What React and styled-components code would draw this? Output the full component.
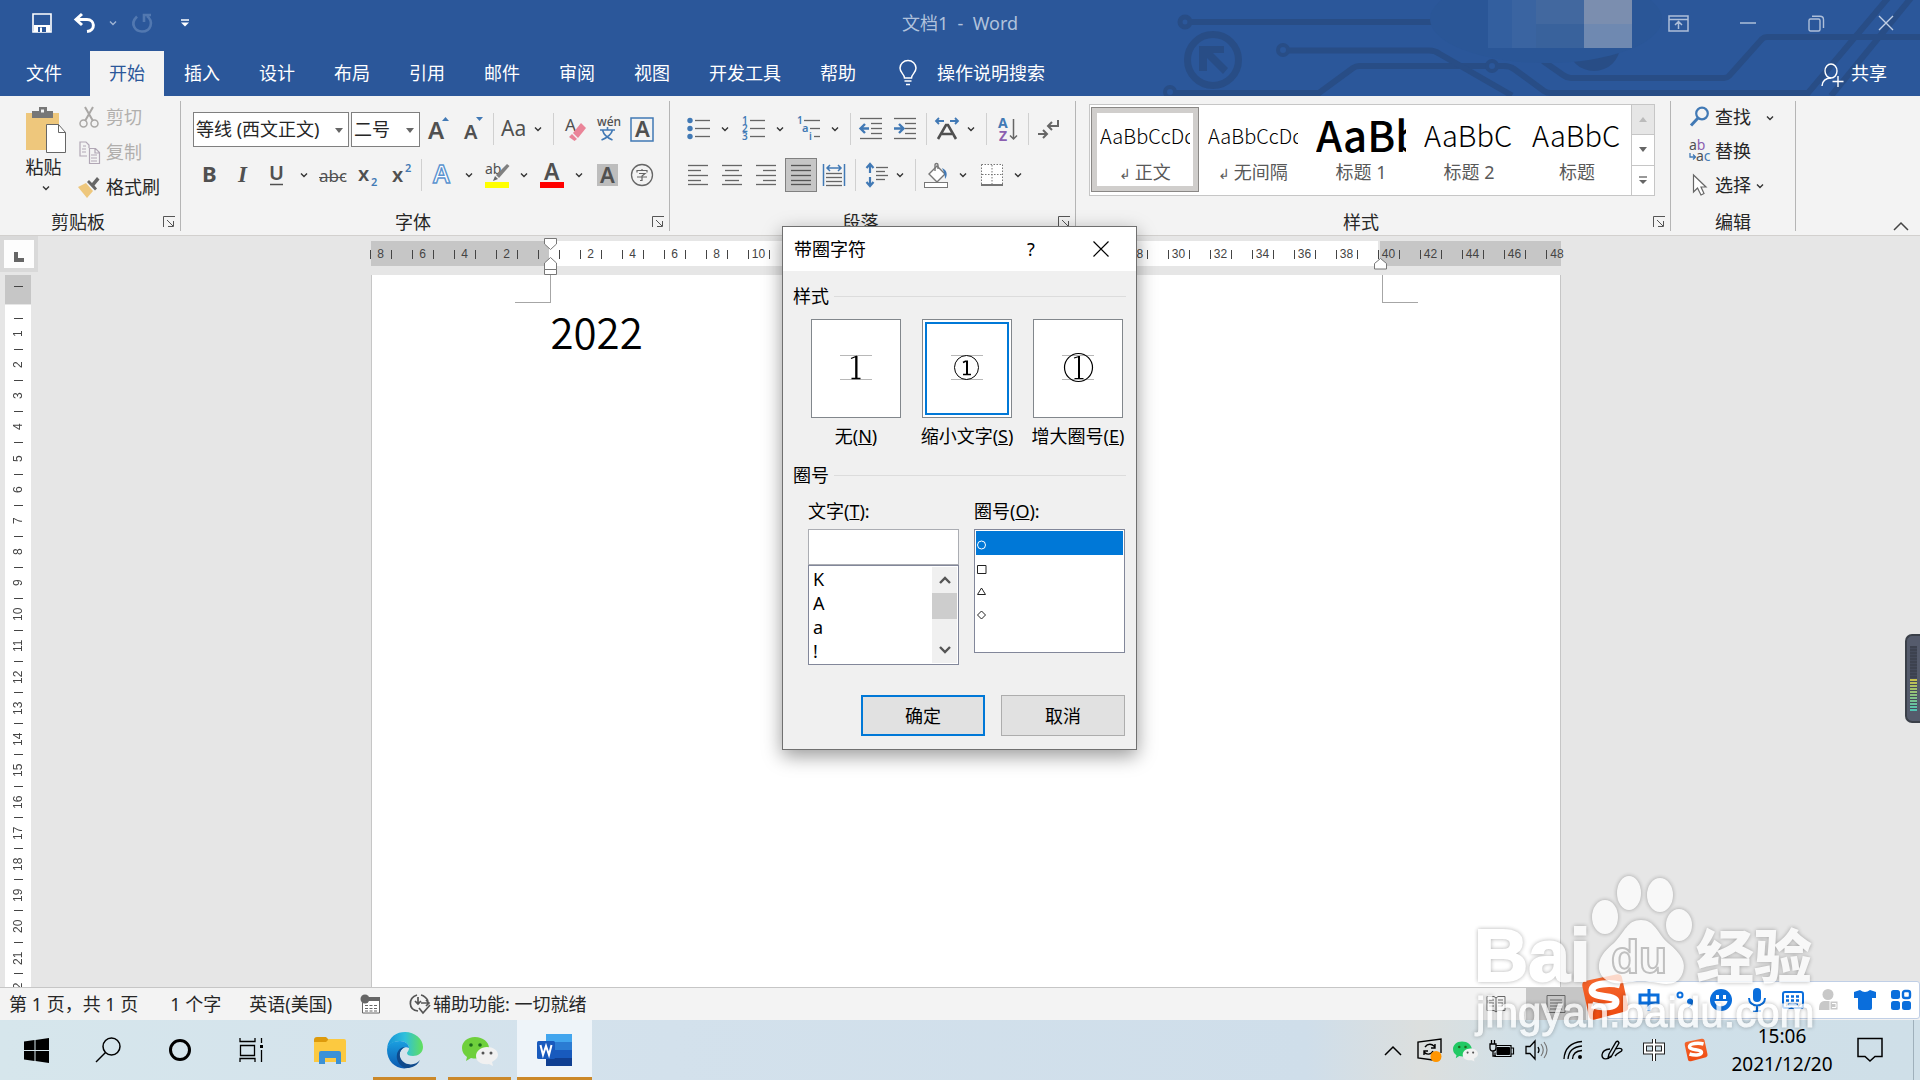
import React, { useState } from "react";
import styled, { createGlobalStyle } from "styled-components";

const GlobalStyle = createGlobalStyle`
  * {
    box-sizing: border-box;
  }

  body {
    margin: 0;
    overflow: hidden;
    background: #e6e6e6;
  }

  body, button, input, select {
    font-family: "Noto Sans", "Noto Sans CJK SC", sans-serif;
    font-size: 18px;
    line-height: 24px;
    color: #262626;
  }

  button {
    padding: 0;
    border: 0;
    background: none;
  }
`;

const StyledApp = styled.div`
  position: relative;
  display: flex;
  flex-direction: column;
  height: 100vh;
  overflow: hidden;
`;

const StyledIcon = styled.svg`
  display: block;
  flex: none;
  overflow: visible;
`;

const Icon = ({ w, h, children }) => (
  <StyledIcon width={w} height={h} viewBox={`0 0 ${w} ${h}`} fill="none" aria-hidden="true">
    {children}
  </StyledIcon>
);

/* ---------- title bar ---------- */

const Header = styled.header`
  position: relative;
  flex: none;
  background: #2b579a;
  color: #fff;
`;

const Circuit = styled.svg`
  position: absolute;
  top: 0;
  right: 0;
`;

const TitleBar = styled.div`
  position: relative;
  display: flex;
  justify-content: space-between;
  align-items: center;
  height: 51px;
  padding-bottom: 5px;
`;

const TitleSide = styled.div`
  display: flex;
  flex: 1;
  align-items: center;
  justify-content: ${props => props.$end ? "flex-end" : "flex-start"};
`;

const DocTitle = styled.div`
  color: #b1c2dc;
  white-space: pre;
`;

const QuickButton = styled.button`
  display: flex;
  align-items: center;
  justify-content: center;
  width: ${props => props.$narrow ? "14px" : "43px"};
  height: 36px;

  &:first-child {
    margin-left: 20px;
  }
`;

const WindowButton = styled.button`
  display: flex;
  align-items: center;
  justify-content: center;
  width: 69px;
  height: 46px;
`;

const TabBar = styled.nav`
  position: relative;
  display: flex;
  align-items: stretch;
  height: 45px;
`;

const Tab = styled.button`
  margin-right: 1px;
  padding: ${props => props.$file ? "0 27px 2px 26px" : "0 19px 2px"};
  background: ${props => props.$active ? "#f3f3f3" : "transparent"};
  color: ${props => props.$active ? "#2b579a" : "#fff"};
`;

const TellMe = styled.button`
  display: flex;
  align-items: center;
  gap: 20px;
  padding: 0 23px 2px;
  color: #fff;
`;

const Share = styled.button`
  display: flex;
  align-items: center;
  gap: 7px;
  margin-left: auto;
  padding: 0 33px 2px 0;
  color: #fff;
`;

/* ---------- ribbon ---------- */

const Ribbon = styled.div`
  display: flex;
  flex: none;
  height: 140px;
  padding: 5px 0 4px;
  border-bottom: 1px solid #d2d0ce;
  background: #f3f3f3;
`;

const StyledGroup = styled.section`
  display: flex;
  flex-direction: column;
  width: ${props => props.$width}px;
  border-right: 1px solid #b5b5b5;
`;

const GroupBody = styled.div`
  flex: 1;
  padding: ${props => props.$pad || "5px 0 0 12px"};
`;

const GroupFoot = styled.div`
  display: flex;
  align-items: center;
  height: 18px;
  line-height: 18px;

  span {
    flex: 1;
    text-align: center;
  }

  button {
    width: 24px;
    padding-left: 7px;
  }
`;

const Row = styled.div`
  display: flex;
  align-items: center;
  gap: ${props => props.$gap || 0}px;
  height: ${props => props.$h || 46}px;
`;

const Tool = styled.button`
  display: flex;
  align-items: center;
  justify-content: center;
  width: ${props => props.$on ? "32px" : "34px"};
  height: 34px;
  margin: ${props => props.$on ? "0 1px" : "0"};
  border: ${props => props.$on ? "1px solid #808080" : "0"};
  background: ${props => props.$on ? "#c6c6c6" : "transparent"};
`;

const DropButton = styled.button`
  display: flex;
  align-items: center;
  width: ${props => props.$tight ? "18px" : "21px"};
  height: 34px;
  padding-left: ${props => props.$tight ? "2px" : "5px"};
`;

const Sep = styled.i`
  width: 1px;
  height: 32px;
  margin: 0 4px 0 3px;
  background: #d0d0d0;
`;

const Combo = styled.label`
  position: relative;
  display: flex;
  width: ${props => props.$wide ? "156px" : "69px"};
  height: 35px;
  margin-right: 2px;
  border: 1px solid #7f7f7f;
  background: #fff;

  select {
    width: 100%;
    padding: 0 2px;
    border: 0;
    background: transparent;
    appearance: none;
  }

  svg {
    position: absolute;
    top: 15px;
    right: 5px;
  }
`;

const PasteButton = styled.button`
  display: flex;
  flex-direction: column;
  align-items: center;
  width: 63px;
  padding-top: 6px;
  gap: 3px;

  span {
    padding-right: 4px;
    line-height: 22px;
  }

  span + svg {
    margin-top: 4px;
  }
`;

const SideColumn = styled.div`
  display: flex;
  flex-direction: column;
  gap: 1px;
`;

const SideButton = styled.button`
  display: flex;
  align-items: center;
  gap: 6px;
  height: 34px;
  padding-bottom: 2px;
  color: ${props => props.disabled ? "#b1afad" : "#262626"};
`;

const Clipboard = styled.div`
  display: flex;
`;

const Gallery = styled.div`
  display: flex;
  height: 92px;
  border: 1px solid #c6c6c6;
  background: #fff;
`;

const GalleryItems = styled.div`
  display: flex;
  flex: 1;
  padding: 2px 0 3px 1px;
`;

const StyleItem = styled.button`
  display: flex;
  flex-direction: column;
  align-items: center;
  flex: 1 1 0;
  min-width: 0;
  border: 1px solid ${props => props.$active ? "#8a8886" : "transparent"};
  box-shadow: ${props => props.$active ? "inset 0 0 0 5px #d0cecc" : "none"};
  color: #595959;

  small {
    font-size: 14px;
  }
`;

const Sample = styled.span`
  display: block;
  width: 90px;
  height: 52px;
  overflow: hidden;
  font-family: "Noto Sans CJK SC", sans-serif;
  font-size: ${props => props.$size}px;
  font-weight: ${props => props.$bold ? 500 : 300};
  line-height: ${props => props.$size > 20 ? "52px" : "55px"};
  text-align: left;
  white-space: nowrap;
  color: #000;
`;

const GalleryScroll = styled.div`
  display: flex;
  flex-direction: column;
  width: 23px;
  border-left: 1px solid #c6c6c6;

  button {
    display: flex;
    flex: 1;
    align-items: center;
    justify-content: center;
  }

  button + button {
    border-top: 1px solid #c6c6c6;
  }

  button:first-child {
    background: #e6e6e6;
  }
`;

const CollapseButton = styled.button`
  align-self: flex-end;
  margin: 0 11px 0 auto;
`;

/* ---------- document ---------- */

const Workspace = styled.main`
  display: flex;
  flex: 1 1 0;
  min-height: 0;
  background: #e6e6e6;
`;

const LeftRail = styled.div`
  display: flex;
  flex-direction: column;
  width: 38px;
  min-height: 0;
`;

const TabStop = styled.button`
  flex: none;
  display: flex;
  align-items: center;
  justify-content: center;
  height: 36px;
  padding-top: 5px;
  border: 4px solid #d9d9d9;
  background: #fdfdfd;
`;

const VerticalRuler = styled.div`
  flex: 1 1 0;
  min-height: 0;
  width: 26px;
  margin: 3px 0 0 5px;
  overflow: hidden;
  background: #fff;
`;

const VerticalMargin = styled.div`
  display: flex;
  align-items: center;
  justify-content: center;
  height: 30px;
  margin-bottom: 13px;
  padding-bottom: 6px;
  border-bottom: 1px solid #e6e6e6;
  background: #c6c6c6;
`;

const Tick = styled.i`
  width: 9px;
  height: 1px;
  background: #444;
`;

const VerticalCell = styled.div`
  display: flex;
  flex-direction: column;
  align-items: center;
  height: 31px;

  &:nth-child(5n) {
    height: 32px;
  }

  span {
    flex: 1;
    writing-mode: vertical-rl;
    transform: rotate(180deg);
    font-family: "Liberation Sans", sans-serif;
    font-size: 12px;
    line-height: 12px;
    text-align: center;
    color: #444;
  }
`;

const Canvas = styled.div`
  display: flex;
  flex: 1;
  flex-direction: column;
  align-items: center;
  min-height: 0;
  padding: 5px 27px 0 0;
`;

const HorizontalRuler = styled.div`
  position: relative;
  flex: none;
  width: 1190px;
  height: 25px;
  margin-bottom: 9px;
  background: linear-gradient(90deg, #c6c6c6 178px, #fff 178px, #fff 1007px, #e6e6e6 1007px, #e6e6e6 1009px, #c6c6c6 1009px);
`;

const RulerTrack = styled.div`
  display: flex;
  height: 25px;
  padding-top: 2px;
  clip-path: inset(0 -8px 0 -1px);
`;

const RulerCell = styled.div`
  display: flex;
  flex: none;
  justify-content: center;
  align-items: center;
  width: 42px;

  &:first-child {
    margin-left: -11px;
  }

  &:last-child span {
    border-right: 0;
  }

  span {
    width: 22px;
    height: 9px;
    border: solid #444;
    border-width: 0 1px;
    font-family: "Liberation Sans", sans-serif;
    font-size: 12px;
    line-height: 9px;
    text-align: center;
    color: #444;
  }
`;

const IndentMarker = styled.svg`
  position: absolute;
  top: ${props => props.$right ? "17px" : "-3px"};
  left: ${props => props.$right ? "1003px" : "173px"};
`;

const Page = styled.article`
  flex: 1;
  width: 1190px;
  border: solid #c6c6c6;
  border-width: 0 1px;
  background: #fff;
`;

const PageCorners = styled.div`
  display: flex;
  justify-content: space-between;
  padding: 0 142px 0 143px;

  i {
    width: 36px;
    height: 28px;
    border: solid #a6a6a6;
    border-width: 0 1px 1px 0;
  }

  i + i {
    border-width: 0 0 1px 1px;
  }
`;

const PageText = styled.p`
  margin: 0;
  padding-left: 179px;
  font-family: "Noto Sans CJK SC", sans-serif;
  font-size: 42px;
  font-weight: 350;
  line-height: 56px;
  color: #000;
`;

const LevelMeter = styled.div`
  position: absolute;
  top: 634px;
  right: 0;
  display: flex;
  justify-content: center;
  width: 15px;
  height: 89px;
  padding: 10px 0;
  border: 2px solid #3b4049;
  border-right: 0;
  border-radius: 7px 0 0 7px;
  background: #555b6c;

  i {
    width: 7px;
    background:
      repeating-linear-gradient(transparent 0, transparent 2px, #444a5a 2px, #444a5a 3px),
      linear-gradient(#3d424f 33px, #c9c04a 33px, #4fc3b5);
  }
`;

/* ---------- dialog ---------- */

const StyledDialog = styled.div`
  position: absolute;
  top: 226px;
  left: calc(50% - 178px);
  width: 355px;
  border: 1px solid #707070;
  background: #f0f0f0;
  box-shadow: 0 6px 18px rgba(0, 0, 0, 0.4);
  color: #000;

  button {
    color: #000;
  }
`;

const DialogTitle = styled.div`
  display: flex;
  align-items: center;
  height: 44px;
  padding: 0 0 1px 11px;
  background: #fff;

  span {
    flex: 1;
  }

  button {
    display: flex;
    align-items: center;
    justify-content: center;
    width: 70px;
    height: 42px;
  }
`;

const DialogBody = styled.div`
  padding: 13px 10px;
`;

const Legend = styled.div`
  display: flex;
  align-items: center;
  gap: 5px;
  line-height: 24px;

  &::after {
    content: "";
    flex: 1;
    height: 1px;
    background: #dcdcdc;
  }
`;

const Choices = styled.div`
  display: flex;
  gap: 17px;
  padding: 11px 0 15px 16px;
`;

const Choice = styled.label`
  display: flex;
  flex-direction: column;
  align-items: center;
  width: 94px;
  gap: 6px;
  white-space: nowrap;

  input {
    position: absolute;
    opacity: 0;
  }

  div {
    display: flex;
    align-items: center;
    justify-content: center;
    width: 90px;
    height: 99px;
    padding-bottom: 3px;
    border: 1px solid #82878c;
    background: #fff;
    outline: ${props => props.$on ? "2px solid #0078d7" : "0"};
    outline-offset: -5px;
  }
`;

const Lists = styled.div`
  display: flex;
  gap: 15px;
  padding: 12px 0 30px 15px;
`;

const ListColumn = styled.div`
  display: flex;
  flex-direction: column;
  width: 151px;

  label {
    margin-bottom: 6px;
  }

  input {
    width: 100%;
    height: 36px;
    border: 1px solid #abadb3;
    background: #fff;
  }
`;

const ListBox = styled.div`
  display: flex;
  height: ${props => props.$tall ? "124px" : "100px"};
  padding: 1px;
  border: 1px solid #82879a;
  background: #fff;
`;

const Options = styled.ul`
  flex: 1;
  margin: 0;
  padding: 0;
  list-style: none;
`;

const Option = styled.li`
  height: 24px;
  padding-left: 3px;
  line-height: 24px;
  color: #000;
`;

const RingOption = styled.li`
  display: flex;
  align-items: center;
  height: ${props => props.$on ? "24px" : "23px"};
  padding-top: 4px;
  background: ${props => props.$on ? "#0078d7" : "transparent"};
`;

const ScrollColumn = styled.div`
  display: flex;
  flex-direction: column;
  width: 25px;
  background: #f0f0f0;

  button {
    display: flex;
    align-items: center;
    justify-content: center;
    height: 26px;
  }

  i {
    height: 26px;
    margin-bottom: auto;
    background: #cdcdcd;
  }
`;

const Actions = styled.div`
  display: flex;
  justify-content: flex-end;
  gap: 16px;
  padding-right: 1px;
`;

const ActionButton = styled.button`
  && {
    width: 124px;
    height: 41px;
    border: ${props => props.$primary ? "2px solid #0078d7" : "1px solid #adadad"};
    background: #e1e1e1;
  }
`;

/* ---------- status bar and taskbar ---------- */

const StatusBar = styled.footer`
  display: flex;
  flex: none;
  align-items: center;
  height: 33px;
  padding-left: 9px;
  border-top: 1px solid #c6c6c6;
  background: #f3f3f3;
`;

const StatusItem = styled.button`
  display: flex;
  align-items: center;
  gap: 2px;
  margin-right: 28px;
  white-space: nowrap;

  &:first-child {
    margin-right: 32px;
  }
`;

const ViewButtons = styled.div`
  display: flex;
  align-self: stretch;
  margin: 0 334px 0 auto;

  button {
    display: flex;
    align-items: center;
    justify-content: center;
    width: 60px;
  }

  button + button {
    background: #c6c6c6;
  }
`;

const ImeBar = styled.div`
  position: absolute;
  right: 0;
  bottom: 61px;
  display: flex;
  align-items: center;
  height: 38px;
  padding-left: 24px;
  border: 1px solid #c0cfe6;
  border-radius: 3px;
  background: #fff;

  button {
    display: flex;
    align-items: center;
    justify-content: center;
    width: 36px;
    height: 36px;
  }
`;

const ImeLogo = styled.div`
  position: absolute;
  right: 291px;
  bottom: 59px;
`;

const Taskbar = styled.div`
  display: flex;
  flex: none;
  height: 60px;
  background: linear-gradient(90deg, #d6e6ec, #d3e1ec 35%, #cfdeea 68%, #dcdfde 74%, #cfe0e9 80%, #cfdfe8);
`;

const SystemButtons = styled.div`
  display: flex;
  margin-right: 4px;
`;

const TaskButton = styled.button`
  display: flex;
  align-items: center;
  justify-content: center;
  width: ${props => props.$app ? "75px" : "72px"};
  padding-top: 3px;
  border: solid transparent;
  border-width: 0 0 3px;
  border-image: ${props => props.$running ? "linear-gradient(90deg, transparent 7px, #cb8829 7px, #cb8829 68px, transparent 68px) 1" : "none"};

  ${props => props.$active ? `
    background: #eef4f9;
    border-color: #cb8829;
  ` : null}
`;

const Tray = styled.div`
  display: flex;
  align-items: center;
  margin-left: auto;
  padding-right: 6px;
`;

const TrayButton = styled.button`
  display: flex;
  align-items: center;
  justify-content: center;
  width: ${props => props.$wide ? "42px" : "36px"};
  height: 60px;
`;

const Clock = styled.button`
  width: 132px;
  padding-right: 2px;
  font-size: 19px;
  line-height: 28px;
  color: #000;

  span {
    display: block;
  }
`;

const DesktopEdge = styled.i`
  width: 1px;
  height: 60px;
  margin-left: 22px;
  background: #9fb0bb;
`;

const Watermark = styled.svg`
  position: absolute;
  right: 90px;
  bottom: 30px;
  pointer-events: none;
  opacity: 0.75;
  filter: drop-shadow(0 0 2px rgba(0, 0, 0, 0.4));
`;

/* ---------- small drawings ---------- */

const Chevron = ({ color = "#333" }) => (
  <Icon w={8} h={6}><path d="M1 1.500l3 3 3-3" stroke={color} strokeWidth="1.400" /></Icon>
);

const Drop = ({ tight }) => (
  <DropButton $tight={tight} aria-label="更多"><Chevron /></DropButton>
);

const Caret = ({ up, color = "#666" }) => (
  <Icon w={8} h={5}><path d={up ? "M0 5h8L4 0z" : "M0 0h8L4 5z"} fill={color} /></Icon>
);

const glyph = { fontFamily: "Noto Sans, sans-serif", fill: "#505050" };

const lines = (rows, color = "#666") => rows.map(([x, y, w], i) => (
  <path key={i} d={`M${x} ${y + 0.5}h${w}`} stroke={color} strokeWidth="1.300" />
));

const icons = {
  grow: <Icon w={22} h={26}><text x="0" y="23" fontSize="24" fontWeight="600" style={glyph}>A</text><path d="M14 5l3.500-4L21 5z" fill="#4179b5" /></Icon>,
  shrink: <Icon w={22} h={26}><text x="2" y="23" fontSize="20" fontWeight="600" style={glyph}>A</text><path d="M14 1h7l-3.500 4z" fill="#4179b5" /></Icon>,
  caseAa: <Icon w={28} h={24}><text x="0" y="19" fontSize="21" style={glyph}>Aa</text></Icon>,
  clear: (
    <Icon w={22} h={26}>
      <text x="1" y="15" fontSize="17" style={glyph}>A</text>
      <path d="M9 17L17 7l5 5-8 10z" fill="#ea8498" /><path d="M5 21l3-3 5 5-2.500 2z" fill="#ea8498" />
    </Icon>
  ),
  pinyin: (
    <Icon w={24} h={28}>
      <text x="0" y="11" fontSize="12" fontWeight="500" style={glyph}>wén</text>
      <path d="M3 15h15M10.500 12v3M5.500 15c1 4 5 8 10 10M15.500 15c-1 4-6 8-11 10" stroke="#4179b5" strokeWidth="1.600" />
    </Icon>
  ),
  boxA: <Icon w={24} h={25}><rect x="0" y="1" width="22" height="23" stroke="#4179b5" strokeWidth="1.500" /><text x="4" y="20" fontSize="22" fontWeight="600" style={glyph}>A</text></Icon>,
  bold: <Icon w={16} h={22}><text x="0" y="18" fontSize="22" fontWeight="700" style={glyph}>B</text></Icon>,
  italic: <Icon w={16} h={22}><text x="2" y="18" fontSize="23" fontStyle="italic" fontWeight="700" style={{ ...glyph, fontFamily: "Liberation Serif, serif" }}>I</text></Icon>,
  underline: <Icon w={18} h={24}><text x="0" y="17" fontSize="20" fontWeight="600" style={glyph}>U</text><path d="M1 21.500h13" stroke="#505050" strokeWidth="1.500" /></Icon>,
  strike: <Icon w={28} h={22}><text x="0" y="18" fontSize="17" style={glyph}>abc</text><path d="M0 13.500h26" stroke="#505050" /></Icon>,
  sub: <Icon w={22} h={24}><text x="2" y="18" fontSize="20" fontWeight="600" style={glyph}>x</text><text x="15" y="23" fontSize="11" fontWeight="600" style={{ ...glyph, fill: "#4179b5" }}>2</text></Icon>,
  sup: <Icon w={22} h={24}><text x="2" y="19" fontSize="20" fontWeight="600" style={glyph}>x</text><text x="15" y="9" fontSize="11" fontWeight="600" style={{ ...glyph, fill: "#4179b5" }}>2</text></Icon>,
  effects: <Icon w={22} h={24}><text x="1" y="20" fontSize="25" fontWeight="600" style={{ ...glyph, fill: "#fff", stroke: "#5b93cf", strokeWidth: 1.4 }}>A</text></Icon>,
  highlight: (
    <Icon w={26} h={28}>
      <text x="0" y="13" fontSize="14" style={glyph}>ab</text>
      <path d="M22 3l2.500 2L14 17l-3-3z" fill="#808080" /><path d="M10 15l3 3-5 2z" fill="#666" />
      <path d="M0 21h24v6H0z" fill="#ff0" />
    </Icon>
  ),
  color: <Icon w={26} h={28}><text x="4" y="19" fontSize="23" fontWeight="600" style={glyph}>A</text><path d="M0 21h24v6H0z" fill="#f00" /></Icon>,
  shade: <Icon w={22} h={22}><path d="M0 0h21v22H0z" fill="#bdbdbd" /><text x="3" y="19" fontSize="22" fontWeight="600" style={glyph}>A</text></Icon>,
  enclose: <Icon w={24} h={24}><circle cx="12" cy="12" r="10.500" stroke="#666" strokeWidth="1.300" /><path d="M7 9.500V7.500h10v2M12 6v1.500M9 10.500h6l-3 2.500v4.500h-2M7 14h10" stroke="#666" strokeWidth="1.200" /></Icon>,
  bullets: <Icon w={24} h={24}>{[3, 11, 19].map(y => <circle key={y} cx="3" cy={y + 0.5} r="2.700" fill="#4179b5" />)}{lines([[8, 3, 15], [8, 11, 15], [8, 19, 15]])}</Icon>,
  numbers: <Icon w={24} h={26}>{["1", "2", "3"].map((n, i) => <text key={n} x="0" y={8 + i * 8} fontSize="10" fontWeight="600" style={{ ...glyph, fill: "#4179b5" }}>{n}</text>)}{lines([[8, 4, 15], [8, 12, 15], [8, 20, 15]])}</Icon>,
  multi: (
    <Icon w={24} h={26}>
      <text x="0" y="8" fontSize="10" fontWeight="600" style={{ ...glyph, fill: "#4179b5" }}>1</text>
      <text x="5" y="16" fontSize="11" fontWeight="600" style={{ ...glyph, fill: "#4179b5" }}>a</text>
      <text x="12" y="24" fontSize="10" fontWeight="600" style={{ ...glyph, fill: "#4179b5" }}>i</text>
      {lines([[7, 4, 16], [13, 12, 10], [17, 20, 6]])}
    </Icon>
  ),
  outdent: <Icon w={24} h={24}>{lines([[0, 1, 22], [11, 6, 11], [11, 11, 11], [11, 16, 11], [0, 21, 22]])}<path d="M9 11.500H1M5 7L.5 11.500 5 16" stroke="#4179b5" strokeWidth="2.400" /></Icon>,
  indent: <Icon w={24} h={24}>{lines([[0, 1, 22], [11, 6, 11], [11, 11, 11], [11, 16, 11], [0, 21, 22]])}<path d="M0 11.500h9M5 7l4.500 4.500L5 16" stroke="#4179b5" strokeWidth="2.400" /></Icon>,
  asian: <Icon w={26} h={24}><path d="M9 4H1m3-3L1 4l3 3M15 4h8m-3-3l3 3-3 3" stroke="#4179b5" strokeWidth="1.800" /><path d="M3 22L11 8h2l8 14M7 17h10" stroke="#505050" strokeWidth="2.600" /></Icon>,
  sort: (
    <Icon w={22} h={26}>
      <text x="1" y="12" fontSize="14" fontWeight="700" style={{ ...glyph, fill: "#4179b5" }}>A</text>
      <text x="2" y="25" fontSize="14" fontWeight="700" style={{ ...glyph, fill: "#8b5fb0" }}>Z</text>
      <path d="M16.500 3v20M13 19.500l3.500 3.500 3.500-3.500" stroke="#666" strokeWidth="1.500" />
    </Icon>
  ),
  marks: <Icon w={24} h={24}><path d="M20 3v6H10m4-4l-4 4 4 4M0 17h9m-4-4l4 4-4 4" stroke="#666" strokeWidth="2" /></Icon>,
  left: <Icon w={22} h={24}>{lines([[0, 2, 20], [0, 7, 13], [0, 12, 20], [0, 17, 13], [0, 21, 20]])}</Icon>,
  center: <Icon w={22} h={24}>{lines([[0, 2, 20], [3, 7, 14], [0, 12, 20], [3, 17, 14], [0, 21, 20]])}</Icon>,
  right: <Icon w={22} h={24}>{lines([[0, 2, 20], [7, 7, 13], [0, 12, 20], [7, 17, 13], [0, 21, 20]])}</Icon>,
  justify: <Icon w={22} h={24}>{lines([[1, 2, 20], [1, 7, 20], [1, 12, 20], [1, 17, 20], [1, 21, 20]], "#555")}</Icon>,
  distribute: (
    <Icon w={24} h={24}>
      <path d="M.5 1v22M21.500 1v22M4 5h14M7 2L4 5l3 3M15 2l3 3-3 3" stroke="#4179b5" strokeWidth="1.500" />
      {lines([[3, 10, 16], [3, 14, 16], [3, 18, 16], [3, 22, 16]])}
    </Icon>
  ),
  spacing: <Icon w={24} h={26}><path d="M5 2v9M1.500 6L5 2l3.500 4M5 15v9M1.500 20L5 24l3.500-4" stroke="#4179b5" strokeWidth="2.200" />{lines([[11, 5, 12], [11, 9, 9], [11, 13, 12], [11, 17, 9]])}</Icon>,
  bucket: (
    <Icon w={26} h={26}>
      <path d="M5 12L13 4l8 8-8 8z" fill="#fff" stroke="#777" strokeWidth="1.400" /><path d="M11 9V3c0-2 3-2 3 0v4" stroke="#777" strokeWidth="1.400" />
      <path d="M18 6c5 2 6 7 3 11 0-4-1-7-3-11z" fill="#4179b5" /><rect x="0.500" y="20.500" width="23" height="5" fill="#fff" stroke="#777" />
    </Icon>
  ),
  borders: <Icon w={24} h={24}><path d="M1.500 1.500h21v20H1.500z" fill="#fff" /><path d="M1.500 1.500h21v20M1.500 1.500v20M12 2v19M2 11.500h20" stroke="#777" strokeDasharray="1.500 1.500" /><path d="M1 22h22" stroke="#555" strokeWidth="1.600" /></Icon>,
};

const Launcher = () => (
  <Icon w={12} h={12}><path d="M.5 11V.5H12M4 4l6 6M10.500 5v5.500H5" stroke="#555" /></Icon>
);

const Group = ({ title, width, pad, launcher = true, children }) => (
  <StyledGroup $width={width}>
    <GroupBody $pad={pad}>{children}</GroupBody>
    <GroupFoot>
      <span>{title}</span>
      {launcher && <button aria-label={title + "设置"}><Launcher /></button>}
    </GroupFoot>
  </StyledGroup>
);

const SogouLogo = ({ size }) => (
  <StyledIcon width={size} height={size} viewBox="0 0 48 48" aria-hidden="true">
    <defs><linearGradient id="sogou" x1="0" y1="0" x2="0" y2="1"><stop stopColor="#f4682f" /><stop offset="1" stopColor="#ef4a10" /></linearGradient></defs>
    <path d="M4 8L35 1.500q5-1 6 3l6 28q1 5-3 6L14 46.500q-5 1-6-3L1.500 14q-1-5 2.500-6z" fill="url(#sogou)" />
    <path d="M39 12C30 9.500 11 10 11 17.500c0 8 24 4 24 11 0 7-16 6-24 3.500" fill="none" stroke="#fff" strokeWidth="7" />
  </StyledIcon>
);

const WeChat = ({ size, green = "#6fd03c" }) => (
  <StyledIcon width={size} height={size} viewBox="0 0 36 36" aria-hidden="true">
    <path d="M13 5C5 5 0 10 0 16c0 4 2 7 5 9l-1 4 5-3c10 2 18-2 18-10C27 10 21 5 13 5z" fill={green} />
    <circle cx="9" cy="13" r="1.800" fill="#1c6b1c" /><circle cx="18" cy="13" r="1.800" fill="#1c6b1c" />
    <path d="M25 15c-6 0-11 4-11 9 0 6 6 9 13 8l4 2-1-4c3-2 6-4 6-7 0-5-5-8-11-8z" fill="#f1f1f1" />
    <circle cx="21" cy="21" r="1.500" fill="#555" /><circle cx="29" cy="21" r="1.500" fill="#555" />
  </StyledIcon>
);

const tabs = ["文件", "开始", "插入", "设计", "布局", "引用", "邮件", "审阅", "视图", "开发工具", "帮助"];

const WordHeader = () => (
  <Header>
    <Circuit width="800" height="96" viewBox="1120 0 800 96" fill="none" stroke="#284d86" strokeWidth="6" aria-hidden="true">
      <circle cx="1185" cy="22" r="5" strokeWidth="5" /><path d="M1191 22h250" />
      <circle cx="1213" cy="60" r="25.500" strokeWidth="7" />
      <path d="M1199 46h25v7h-11l15 15-5 6-16-16v13h-8z" fill="#284d86" stroke="none" />
      <circle cx="1170" cy="92" r="5" strokeWidth="4" /><path d="M1175 93h144l34-25q3-2 6-2h128" />
      <circle cx="1283" cy="50" r="5" strokeWidth="4" /><path d="M1289 50.500h140q6 0 10 3l73 42" />
      <circle cx="1492" cy="66" r="5" strokeWidth="4" /><path d="M1498 66h6q6 0 10 3l30 22q3 2 7 2h257l80-95" />
      <path d="M1543 61l20 14q4 3 8 3h153q3 0 5-2l33-37q2-2 5-2h155M1831 96l80-98" />
      <ellipse cx="1594" cy="46" rx="26" ry="25" fill="#284d86" stroke="none" />
      <ellipse cx="1546" cy="19" rx="116" ry="44" fill="#2a5697" stroke="none" />
      <g stroke="none">
        <path d="M1488 0h24v48h-24z" fill="#335f9f" /><path d="M1512 0h24v48h-24z" fill="#3a64a1" />
        <path d="M1536 0h48v24h-48z" fill="#42689f" /><path d="M1536 24h48v24h-48z" fill="#39629c" />
        <path d="M1584 0h48v24h-48z" fill="#7b8eaf" /><path d="M1584 24h48v24h-48z" fill="#6f89b1" />
      </g>
    </Circuit>
    <TitleBar>
      <TitleSide>
        <QuickButton aria-label="保存">
          <Icon w={20} h={20}><path d="M1 1h18v18H1z" stroke="#fff" strokeWidth="1.600" /><path d="M2 12h16v7H2z" fill="#fff" /><path d="M6 14h8v5H6z" fill="#2b579a" /><path d="M8 14.500h2V19H8z" fill="#fff" /></Icon>
        </QuickButton>
        <QuickButton aria-label="撤消">
          <Icon w={24} h={22}><path d="M9 2L3 7.500l6 5.500M3.500 7.500H14c8 0 9 11 0 12" stroke="#fff" strokeWidth="3" /></Icon>
        </QuickButton>
        <QuickButton $narrow aria-label="撤消列表"><Chevron color="#9fb4d4" /></QuickButton>
        <QuickButton aria-label="重复">
          <Icon w={22} h={22}><path d="M6 4.500c-8 8-1 15 5 15 9 0 12-10 5-15.500M13 10V3h7" stroke="#5278b0" strokeWidth="2.600" /></Icon>
        </QuickButton>
        <QuickButton aria-label="自定义快速访问工具栏">
          <Icon w={8} h={8}><path d="M0 1h8" stroke="#fff" strokeWidth="1.500" /><path d="M0 3.500h8L4 7.500z" fill="#fff" /></Icon>
        </QuickButton>
      </TitleSide>
      <DocTitle>文档1  -  Word</DocTitle>
      <TitleSide $end>
        <WindowButton aria-label="功能区显示选项">
          <Icon w={21} h={17}><path d="M1 1h19v15H1zM1 4.500h19M10.500 14V7M7 10l3.500-3.500L14 10" stroke="#aebfd9" strokeWidth="1.500" /></Icon>
        </WindowButton>
        <WindowButton aria-label="最小化"><Icon w={16} h={2}><path d="M0 1h16" stroke="#aebfd9" strokeWidth="1.500" /></Icon></WindowButton>
        <WindowButton aria-label="还原">
          <Icon w={17} h={17}><rect x="1" y="4" width="11" height="12" rx="1.500" stroke="#aebfd9" strokeWidth="1.400" /><path d="M4 1.200h8q3.500 0 3.500 3.500V13" stroke="#aebfd9" strokeWidth="1.400" /></Icon>
        </WindowButton>
        <WindowButton aria-label="关闭"><Icon w={16} h={16}><path d="M1 1l14 14M15 1L1 15" stroke="#c3d0e4" strokeWidth="1.400" /></Icon></WindowButton>
      </TitleSide>
    </TitleBar>
    <TabBar>
      {tabs.map((name, i) => <Tab key={name} $file={i === 0} $active={i === 1}>{name}</Tab>)}
      <TellMe>
        <Icon w={18} h={26}><path d="M5.500 18c0-4-4.500-5-4.500-10a8 7.500 0 0116 0c0 5-4.500 6-4.500 10zM5.500 21h7M7 24.500h4" stroke="#fff" strokeWidth="1.500" /></Icon>
        操作说明搜索
      </TellMe>
      <Share>
        <Icon w={23} h={24}><ellipse cx="10" cy="10" rx="6" ry="7" stroke="#fff" strokeWidth="1.400" /><path d="M1 25c0-5 4-8 9-8M17 15v11M11.500 20.500h11" stroke="#fff" strokeWidth="1.400" /></Icon>
        共享
      </Share>
    </TabBar>
  </Header>
);

const samples = [
  { name: "正文", mark: true, text: "AaBbCcDd", size: 20, active: true },
  { name: "无间隔", mark: true, text: "AaBbCcDd", size: 20 },
  { name: "标题 1", text: "AaBb", size: 42, bold: true },
  { name: "标题 2", text: "AaBbC", size: 29 },
  { name: "标题", text: "AaBbC", size: 29 },
];

const tool = (name, label, on) => <Tool key={name} $on={on} aria-label={label}>{icons[name]}</Tool>;

const WordRibbon = () => (
  <Ribbon>
    <Group title="剪贴板" width={181} pad="0 0 0 14px">
      <Clipboard>
        <PasteButton>
          <Icon w={42} h={46}>
            <path d="M1 6h33v37H1z" fill="#eec77c" /><path d="M7 4h7V0h8v4h6v7H7z" fill="#777" /><path d="M16 2.500h3v3h-3z" fill="#f3f3f3" />
            <path d="M21.500 17.500h12l7 8v20h-19z" fill="#fff" stroke="#666" /><path d="M33.500 17.500v8h7" stroke="#666" />
          </Icon>
          <span>粘贴</span>
          <Chevron />
        </PasteButton>
        <SideColumn>
          <SideButton disabled>
            <Icon w={23} h={24}><path d="M8 2l8 14M16 2L8 16" stroke="#a9a7a5" strokeWidth="2" /><circle cx="6.500" cy="18.500" r="3.500" stroke="#a9a7a5" strokeWidth="1.500" /><circle cx="17.500" cy="18.500" r="3.500" stroke="#a9a7a5" strokeWidth="1.500" /></Icon>
            剪切
          </SideButton>
          <SideButton disabled>
            <Icon w={23} h={24}><path d="M10 16H3V2h6l3 3v3M6 6h3M5 9h4M5 12h4" stroke="#b1a7b5" strokeWidth="1.200" /><path d="M12.500 8.500h6l4 4v11h-10zM18 9v4h4M14 15h6M14 18h6M14 21h6" stroke="#b1a7b5" strokeWidth="1.200" /></Icon>
            复制
          </SideButton>
          <SideButton>
            <Icon w={23} h={24}><path d="M1 12l8-4 7 8-6 7z" fill="#eec77c" /><path d="M10 7l2-2 3 3 5-6 2.500 2.500-5 6 2.500 3-2 2z" fill="#666" /></Icon>
            格式刷
          </SideButton>
        </SideColumn>
      </Clipboard>
    </Group>

    <Group title="字体" width={489}>
      <Row>
        <Combo $wide>
          <select aria-label="字体"><option>等线 (西文正文)</option></select>
          <Caret />
        </Combo>
        <Combo>
          <select aria-label="字号"><option>二号</option></select>
          <Caret />
        </Combo>
        {tool("grow", "增大字号")}
        {tool("shrink", "减小字号")}
        <Sep />
        {tool("caseAa", "更改大小写")}
        <Drop tight />
        <Sep />
        {tool("clear", "清除格式")}
        {tool("pinyin", "拼音指南")}
        {tool("boxA", "字符边框")}
      </Row>
      <Row>
        {tool("bold", "加粗")}
        {tool("italic", "倾斜")}
        {tool("underline", "下划线")}
        <Drop />
        {tool("strike", "删除线")}
        {tool("sub", "下标")}
        {tool("sup", "上标")}
        <Sep />
        {tool("effects", "文本效果")}
        <Drop />
        {tool("highlight", "突出显示")}
        <Drop />
        {tool("color", "字体颜色")}
        <Drop />
        {tool("shade", "字符底纹")}
        {tool("enclose", "带圈字符")}
      </Row>
    </Group>

    <Group title="段落" width={406}>
      <Row>
        {tool("bullets", "项目符号")}
        <Drop />
        {tool("numbers", "编号")}
        <Drop />
        {tool("multi", "多级列表")}
        <Drop />
        <Sep />
        {tool("outdent", "减少缩进量")}
        {tool("indent", "增加缩进量")}
        <Sep />
        {tool("asian", "中文版式")}
        <Drop tight />
        <Sep />
        {tool("sort", "排序")}
        <Sep />
        {tool("marks", "显示编辑标记")}
      </Row>
      <Row>
        {tool("left", "左对齐")}
        {tool("center", "居中")}
        {tool("right", "右对齐")}
        {tool("justify", "两端对齐", true)}
        {tool("distribute", "分散对齐")}
        <Sep />
        {tool("spacing", "行距")}
        <Drop tight />
        <Sep />
        {tool("bucket", "底纹")}
        <Drop />
        {tool("borders", "边框")}
        <Drop />
      </Row>
    </Group>

    <Group title="样式" width={595} pad="3px 15px 0 13px">
      <Gallery>
        <GalleryItems>
          {samples.map(s => (
            <StyleItem key={s.name} $active={s.active}>
              <Sample $size={s.size} $bold={s.bold}>{s.text}</Sample>
              <span>{s.mark && <small>↲ </small>}{s.name}</span>
            </StyleItem>
          ))}
        </GalleryItems>
        <GalleryScroll>
          <button aria-label="上一行"><Caret up color="#bbb" /></button>
          <button aria-label="下一行"><Caret /></button>
          <button aria-label="其他"><Icon w={8} h={8}><path d="M0 1h8" stroke="#777" strokeWidth="1.500" /><path d="M0 4h8L4 8z" fill="#666" /></Icon></button>
        </GalleryScroll>
      </Gallery>
    </Group>

    <Group title="编辑" width={125} pad="0 0 0 18px" launcher={false}>
      <Row $h={34} $gap={10}>
        <SideButton>
          <Icon w={20} h={22}><circle cx="13" cy="7.500" r="5.800" stroke="#4179b5" strokeWidth="2.200" /><path d="M9 12l-7 7.500" stroke="#4179b5" strokeWidth="3" /></Icon>
          查找
        </SideButton>
        <Drop />
      </Row>
      <Row $h={34}>
        <SideButton>
          <Icon w={20} h={24}>
            <text x="0" y="11" fontSize="14" style={glyph}>a<tspan fill="#8b5fb0">b</tspan></text>
            <text x="7" y="22" fontSize="14" style={glyph}>a<tspan fill="#4179b5">c</tspan></text>
            <path d="M1 14v4h5M4 15.500L6.500 18 4 20.500" stroke="#4179b5" strokeWidth="1.300" />
          </Icon>
          替换
        </SideButton>
      </Row>
      <Row $h={34}>
        <SideButton>
          <Icon w={20} h={24}><path d="M4.500 2v17l4-4 3.500 7 3-1.500-3-6.500h5z" fill="#fff" stroke="#666" strokeWidth="1.200" /></Icon>
          选择
        </SideButton>
        <Drop />
      </Row>
    </Group>

    <CollapseButton aria-label="折叠功能区"><Icon w={16} h={10}><path d="M1 9l7-7 7 7" stroke="#444" strokeWidth="1.500" /></Icon></CollapseButton>
  </Ribbon>
);

const horizontal = Array.from({ length: 29 }, (_, i) => Math.abs(i * 2 - 8));
const vertical = Array.from({ length: 22 }, (_, i) => i + 1);

const Editor = () => (
  <Workspace>
    <LeftRail>
      <TabStop aria-label="制表符"><Icon w={10} h={10}><path d="M2 0v8h8" stroke="#666" strokeWidth="4" /></Icon></TabStop>
      <VerticalRuler>
        <VerticalMargin><Tick /></VerticalMargin>
        <div>
          {vertical.map(n => <VerticalCell key={n}><Tick /><span>{n}</span></VerticalCell>)}
        </div>
      </VerticalRuler>
    </LeftRail>
    <Canvas>
      <HorizontalRuler>
        <RulerTrack>
          {horizontal.map((n, i) => <RulerCell key={i}><span>{n || ""}</span></RulerCell>)}
        </RulerTrack>
        <IndentMarker width="13" height="37" viewBox="0 0 13 37" fill="#fff" stroke="#777">
          <path d="M.5.500h12V6l-6 5.500L.5 6zM.5 31.500V25l6-5.500 6 5.500v6.500zM.5 31.500h12v5H.5z" />
        </IndentMarker>
        <IndentMarker $right width="13" height="12" viewBox="0 0 13 12" fill="#fff" stroke="#777">
          <path d="M.5 11V5.500l6-5 6 5V11z" />
        </IndentMarker>
      </HorizontalRuler>
      <Page>
        <PageCorners><i /><i /></PageCorners>
        <PageText>2022</PageText>
      </Page>
    </Canvas>
  </Workspace>
);

const Guide = ({ children }) => (
  <Icon w={32} h={30}><path d="M0 3.500h32M0 27.500h32" stroke="#b8b8b8" />{children}</Icon>
);

const ringStyles = [
  { label: "无", hot: "N", art: <Guide><path d="M11 6.500l5-2V26M11.500 26.500h9" stroke="#000" strokeWidth="1.300" /><path d="M16.500 4v22" stroke="#000" strokeWidth="2" /></Guide> },
  { label: "缩小文字", hot: "S", art: <Guide><circle cx="15.500" cy="15.500" r="12" stroke="#000" fill="#fff" /><path d="M12 10.500l3-1.500M12 22.500h8" stroke="#000" strokeWidth="1.600" /><path d="M16 8.500v14" stroke="#000" strokeWidth="2" /></Guide> },
  { label: "增大圈号", hot: "E", art: <Guide><circle cx="16.500" cy="15.500" r="14" stroke="#000" strokeWidth="1.200" /><path d="M12 6l5-1.500M12.500 26.500h9" stroke="#000" strokeWidth="1.200" /><path d="M17 4v22" stroke="#000" strokeWidth="2" /></Guide> },
];

const rings = [
  <circle key="c" cx="5.500" cy="6" r="4" />,
  <path key="s" d="M1.500 2.500h8.500v8H1.500z" />,
  <path key="t" d="M5.500 2L9.500 8.500h-8z" />,
  <path key="d" d="M5.500 2l4 4-4 4-4-4z" />,
];

const EncloseDialog = () => {
  const [style, setStyle] = useState("S");

  return (
    <StyledDialog role="dialog" aria-label="带圈字符">
      <DialogTitle>
        <span>带圈字符</span>
        <button aria-label="帮助">?</button>
        <button aria-label="关闭对话框"><Icon w={16} h={16}><path d="M.5.500l15 15M15.500.500l-15 15" stroke="#000" strokeWidth="1.200" /></Icon></button>
      </DialogTitle>
      <DialogBody>
        <Legend>样式</Legend>
        <Choices>
          {ringStyles.map(r => (
            <Choice key={r.hot} $on={style === r.hot}>
              <input type="radio" name="ring" checked={style === r.hot} onChange={() => setStyle(r.hot)} />
              <div>{r.art}</div>
              <span>{r.label}(<u>{r.hot}</u>)</span>
            </Choice>
          ))}
        </Choices>
        <Legend>圈号</Legend>
        <Lists>
          <ListColumn>
            <label htmlFor="ring-text">文字(<u>T</u>):</label>
            <input id="ring-text" type="text" />
            <ListBox>
              <Options role="listbox" aria-label="文字">
                {["K", "A", "a", "!"].map(c => <Option key={c} role="option">{c}</Option>)}
              </Options>
              <ScrollColumn>
                <button aria-label="向上"><Icon w={12} h={8}><path d="M1 7l5-5 5 5" stroke="#555" strokeWidth="2.400" /></Icon></button>
                <i />
                <button aria-label="向下"><Icon w={12} h={8}><path d="M1 1l5 5 5-5" stroke="#555" strokeWidth="2.400" /></Icon></button>
              </ScrollColumn>
            </ListBox>
          </ListColumn>
          <ListColumn>
            <label id="ring-shape">圈号(<u>O</u>):</label>
            <ListBox $tall>
              <Options role="listbox" aria-labelledby="ring-shape">
                {rings.map((shape, i) => (
                  <RingOption key={i} role="option" $on={i === 0}>
                    <Icon w={12} h={12}><g stroke={i === 0 ? "#fff" : "#222"}>{shape}</g></Icon>
                  </RingOption>
                ))}
              </Options>
            </ListBox>
          </ListColumn>
        </Lists>
        <Actions>
          <ActionButton $primary>确定</ActionButton>
          <ActionButton>取消</ActionButton>
        </Actions>
      </DialogBody>
    </StyledDialog>
  );
};

const Status = () => (
  <StatusBar>
    <StatusItem>第 1 页，共 1 页</StatusItem>
    <StatusItem>1 个字</StatusItem>
    <StatusItem>英语(美国)</StatusItem>
    <StatusItem aria-label="宏">
      <Icon w={21} h={19}><path d="M2.500 8v10h17V3.500H9" fill="#fff" stroke="#666" /><path d="M9 2h11v4H9z" fill="#666" /><circle cx="5" cy="4" r="4.500" fill="#666" /><path d="M5 10.500h12M5 13.500h12M5 16h12" stroke="#666" strokeDasharray="3 1.500" /></Icon>
    </StatusItem>
    <StatusItem>
      <Icon w={22} h={22}><path d="M8 2C-1 5-1 17 9 18M12 2c4 1 6 4 7 6M9 4v6M6 8l3 3 3-3M12 10h8M17 7l3 3-3 3M10 15l4 5 7-8" stroke="#555" strokeWidth="1.700" /></Icon>
      辅助功能: 一切就绪
    </StatusItem>
    <ViewButtons>
      <button aria-label="阅读视图"><Icon w={20} h={18}><path d="M1 1.500h7l2 1.500 2-1.500h7v14h-7l-2 1.500-2-1.500H1zM10 3v14M3 5h5M3 8h5M3 11h5M12 5h5M12 8h5M12 11h5" stroke="#666" /></Icon></button>
      <button aria-label="页面视图"><Icon w={20} h={18}><path d="M1 .5h18v17H1zM4 5h12M4 8h12M4 11h12M4 14h12" stroke="#666" /></Icon></button>
    </ViewButtons>
  </StatusBar>
);

const Ime = () => (
  <>
    <ImeBar>
      <button aria-label="中文输入"><Icon w={22} h={22}><path d="M2 6h18v8H2zM11 0v22" stroke="#0a6edc" strokeWidth="3" /></Icon></button>
      <button aria-label="标点"><Icon w={20} h={20}><circle cx="5" cy="5" r="2.500" stroke="#0a6edc" strokeWidth="2" /><path d="M12 11a3 3 0 116 1c0 3-2 5-5 6 1-1 2-2 2-3-2 0-3-2-3-4z" fill="#0a6edc" /></Icon></button>
      <button aria-label="表情"><Icon w={22} h={22}><circle cx="11" cy="11" r="11" fill="#0a6edc" /><path d="M6 6h3v4H6zM13 6h3v4h-3zM4.500 12h13c-1 7-12 7-13 0z" fill="#fff" /></Icon></button>
      <button aria-label="语音"><Icon w={20} h={24}><rect x="6" y="0" width="8" height="14" rx="4" fill="#0a6edc" /><path d="M2 10c0 10 16 10 16 0M10 18v5M6 23h8" stroke="#0a6edc" strokeWidth="2" /></Icon></button>
      <button aria-label="键盘"><Icon w={22} h={18}><rect x="1" y="1" width="20" height="16" rx="2" stroke="#0a6edc" strokeWidth="2" /><path d="M4 5.500h14M4 9.500h14" stroke="#0a6edc" strokeWidth="2.500" strokeDasharray="3 2" /><path d="M6 13.500h10" stroke="#0a6edc" strokeWidth="2" /></Icon></button>
      <button aria-label="账户"><Icon w={20} h={22}><circle cx="9" cy="5.500" r="5.500" fill="#c8c8c8" /><path d="M0 21c0-10 4-9 9-9 3 0 5 0 6 1v8z" fill="#c8c8c8" /><path d="M11 12h8v9h-8z" fill="#c8c8c8" stroke="#fff" /><path d="M13 14.500h4v4h-4" stroke="#fff" /></Icon></button>
      <button aria-label="皮肤"><Icon w={24} h={22}><path d="M7 1q5 4 10 0l6 2v6h-4v10q0 2-2 2H7q-2 0-2-2V9H1V3z" fill="#0a6edc" /></Icon></button>
      <button aria-label="工具箱"><Icon w={20} h={20}><rect width="9" height="9" rx="2.500" fill="#0a6edc" /><rect x="12" y="1" width="7" height="7" rx="2" stroke="#0a6edc" strokeWidth="2.400" /><rect y="11" width="9" height="9" rx="2.500" fill="#0a6edc" /><rect x="11" y="11" width="9" height="9" rx="2.500" fill="#0a6edc" /></Icon></button>
    </ImeBar>
    <ImeLogo><SogouLogo size={48} /></ImeLogo>
  </>
);

const WindowsTaskbar = () => (
  <Taskbar>
    <SystemButtons>
      <TaskButton aria-label="开始菜单"><Icon w={25} h={25}><path d="M0 3.500L10.500 2v10H0zM11.500 2L25 0v12H11.500zM0 13h10.500v10L0 21.500zM11.500 13H25v12l-13.500-2z" fill="#000" /></Icon></TaskButton>
      <TaskButton aria-label="搜索"><Icon w={26} h={26}><circle cx="16.500" cy="9.500" r="8.500" stroke="#000" strokeWidth="1.500" /><path d="M10.500 15.500L1 25" stroke="#000" strokeWidth="1.500" /></Icon></TaskButton>
      <TaskButton aria-label="Cortana"><Icon w={24} h={24}><circle cx="12" cy="12" r="9.500" stroke="#000" strokeWidth="3" /></Icon></TaskButton>
      <TaskButton aria-label="任务视图"><Icon w={26} h={24}><path d="M1 0v3.500h15V0M1.500 7.500h14v10h-14zM1 24v-3.500h15V24M22.500 0v5M22.500 12v12" stroke="#000" strokeWidth="1.300" /><path d="M21 7h3v3h-3z" fill="#000" /></Icon></TaskButton>
    </SystemButtons>
    <TaskButton $app aria-label="文件资源管理器"><Icon w={32} h={28}><path d="M0 4q0-3 3-3h9l3 3-3 4H0z" fill="#dd9a0c" /><path d="M0 6h12l3-3h15q2 0 2 2v21H0z" fill="#fcc940" /><path d="M5 28V17q0-2 2-2h18q2 0 2 2v11h-5v-6H11v6z" fill="#3b91d6" /></Icon></TaskButton>
    <TaskButton $app $running aria-label="Microsoft Edge">
      <StyledIcon width="36" height="36" viewBox="0 0 36 36" aria-hidden="true">
        <defs>
          <linearGradient id="edgeTop"><stop stopColor="#1591d8" /><stop offset=".5" stopColor="#2fc0dc" /><stop offset="1" stopColor="#62e05a" /></linearGradient>
          <linearGradient id="edgeSide" x1="0" y1="0" x2="0" y2="1"><stop stopColor="#1a9fe0" /><stop offset="1" stopColor="#0b59b0" /></linearGradient>
        </defs>
        <path d="M0 16C2 4 10 0 18 0c10 0 18 7 18 15 0 6-5 9-10 9-4 0-6-1-6-3 0-1 2-2 2-5 0-4-4-7-9-7C7 9 2 12 0 16z" fill="url(#edgeTop)" />
        <path d="M0 18C0 12 6 9 13 9c5 0 9 3 9 7-6-3-11 4-9 10 1 5 5 9 11 9-12 5-24-4-24-17z" fill="url(#edgeSide)" />
        <path d="M18 15c-7 3-7 12 0 16 6 3 12 1 15-3-4 8-11 8-15 8-7-3-9-9-8-14 1-4 4-7 8-7z" fill="#0f4a8c" />
      </StyledIcon>
    </TaskButton>
    <TaskButton $app $running aria-label="微信"><WeChat size={36} /></TaskButton>
    <TaskButton $app $active aria-label="Word">
      <Icon w={36} h={34}>
        <path d="M9 1h26v9H9z" fill="#41a5ee" /><path d="M9 9h26v8H9z" fill="#2b7cd3" /><path d="M9 17h26v8H9z" fill="#185abd" /><path d="M9 25h26v8H9z" fill="#103f91" />
        <rect x="0" y="8" width="18" height="18" rx="1.500" fill="#185abd" /><path d="M3.500 12l2.500 10 3-9 3 9 2.500-10" stroke="#fff" strokeWidth="2" />
      </Icon>
    </TaskButton>
    <Tray>
      <TrayButton aria-label="显示隐藏的图标"><Icon w={18} h={11}><path d="M1 10l8-8 8 8" stroke="#000" strokeWidth="1.500" /></Icon></TrayButton>
      <TrayButton aria-label="更新"><Icon w={25} h={24}><path d="M16 22L1 20V4l23-3v14M8 9c3-4 7-3 9-1l1 2M18 6v4h-4M16 13c-2 4-7 4-9 1M7 17v-4h4" stroke="#000" strokeWidth="1.400" /><circle cx="19" cy="18.500" r="5.500" fill="#ff9500" /></Icon></TrayButton>
      <TrayButton aria-label="微信通知"><WeChat size={25} green="#22c964" /></TrayButton>
      <TrayButton aria-label="电源"><Icon w={26} h={20}><path d="M2 4h6v4q0 3-3 3t-3-3zM3.500 4V0M6.500 4V0M5 11v5h3" stroke="#000" strokeWidth="1.300" /><path d="M8 5.500h15v11H7v-4M23.500 8h2v6h-2" stroke="#000" strokeWidth="1.200" /><path d="M9 7.500h12.500v7H9z" fill="#000" stroke="#000" /></Icon></TrayButton>
      <TrayButton aria-label="音量"><Icon w={24} h={20}><path d="M1 6.500h4L10 1v18l-5-5.500H1zM13 7q2 3 0 6" stroke="#000" strokeWidth="1.300" /><path d="M16 4q4.500 6 0 12M19 2q6 8 0 16" stroke="#777" strokeWidth="1.200" /></Icon></TrayButton>
      <TrayButton aria-label="网络"><Icon w={20} h={20}><path d="M1 19Q2 3 19 1.500M5 19Q6 7 19 6M9.500 19Q10 11 19 10.500" stroke="#000" strokeWidth="1.300" /><circle cx="17" cy="17" r="2" fill="#000" /></Icon></TrayButton>
      <TrayButton $wide aria-label="触笔"><Icon w={22} h={22}><path d="M8 15L15 3q2-2 3 1l-8 14-3 1zM9 10c-5 0-8 3-8 6 0 5 6 5 9 1M14 10c3-1 7-1 7 1s-4 2-7 6" stroke="#000" strokeWidth="1.400" /></Icon></TrayButton>
      <TrayButton $wide aria-label="中文"><Icon w={22} h={24}><path d="M2 6.500h18v8H2zM11 1v22" stroke="#222" strokeWidth="4" /><path d="M2 6.500h18v8H2zM11 1v22" stroke="#fff" strokeWidth="2" /></Icon></TrayButton>
      <TrayButton $wide aria-label="搜狗输入法"><SogouLogo size={24} /></TrayButton>
      <Clock><span>15:06</span><span>2021/12/20</span></Clock>
      <TrayButton $wide aria-label="通知"><Icon w={26} h={26}><path d="M1 1.500h24v18h-7l-5 4.500-5-4.500H1z" stroke="#000" strokeWidth="1.500" /></Icon></TrayButton>
      <DesktopEdge />
    </Tray>
  </Taskbar>
);

const Mark = () => (
  <Watermark width="360" height="180" viewBox="1470 870 360 180" aria-label="Baidu 经验">
    <g fill="#fff">
      <text x="1474" y="981" fontFamily="Liberation Sans" fontWeight="700" fontSize="75" stroke="#fff" strokeWidth="2">Bai</text>
      <ellipse cx="1605" cy="917" rx="13" ry="17" /><ellipse cx="1629" cy="893" rx="12" ry="17" />
      <ellipse cx="1660" cy="895" rx="13" ry="17" /><ellipse cx="1679" cy="925" rx="13" ry="16" />
      <path d="M1641 920c14 0 16 13 27 23 14 11 18 20 15 29-4 13-15 13-25 11-12-2-22-2-34 0-12 2-23-3-25-14-1-10 4-17 15-26 11-11 13-23 27-23z" />
      <text x="1611" y="973" fontFamily="Liberation Sans" fontWeight="700" fontSize="46" stroke="#b4b4b4" strokeWidth="2">du</text>
      <text x="1696" y="978" fontFamily="Noto Sans CJK SC" fontWeight="900" fontSize="58">经验</text>
      <text x="1476" y="1027" fontFamily="Liberation Sans" fontSize="42" stroke="#fff" strokeWidth="1">jingyan.baidu.com</text>
    </g>
  </Watermark>
);

const App = () => (
  <StyledApp>
    <GlobalStyle />
    <WordHeader />
    <WordRibbon />
    <Editor />
    <Status />
    <WindowsTaskbar />
    <LevelMeter><i /></LevelMeter>
    <EncloseDialog />
    <Ime />
    <Mark />
  </StyledApp>
);

export default App;
